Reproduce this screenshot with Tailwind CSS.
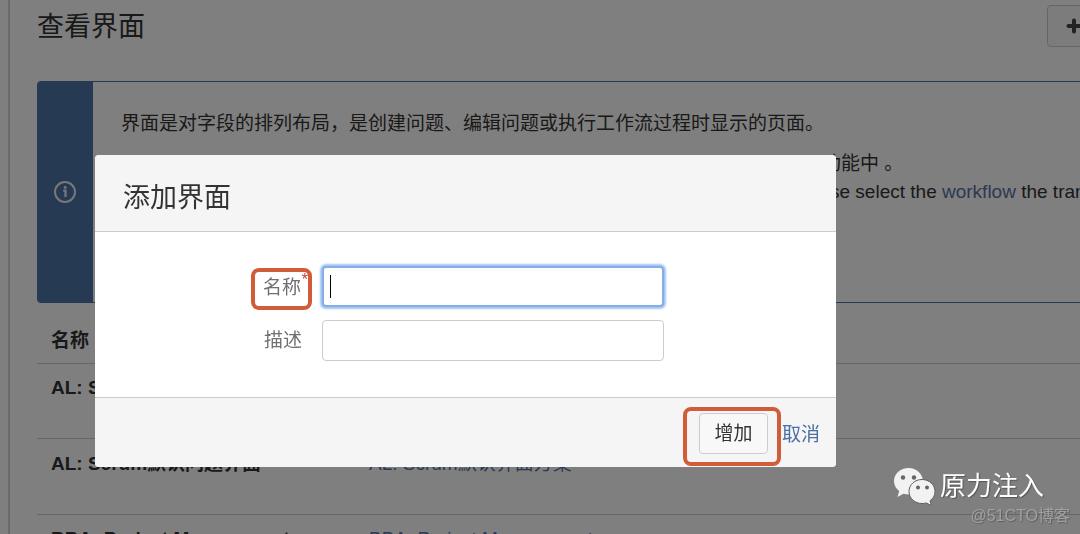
<!DOCTYPE html>
<html lang="zh-CN">
<head>
<meta charset="utf-8">
<title>查看界面</title>
<script src="https://cdn.jsdelivr.net/npm/@tailwindcss/browser@4"></script>
</head>
<body class="h-screen overflow-hidden bg-white font-['Liberation_Sans','Noto_Sans_CJK_SC',sans-serif] text-[19px] leading-7 text-[#333333]">
<div class="flex h-screen overflow-hidden">
  <aside class="w-2 shrink-0"></aside>
  <main class="min-w-0 flex-1 border-l-2 border-[#d4d4d4] pl-[27px]">
    <header class="flex h-20 items-start justify-between pt-[5px]">
      <h1 class="pt-1 text-[27px] leading-9">查看界面</h1>
      <button type="button" aria-label="添加界面" class="-mr-2 flex h-[42px] w-[41px] items-center rounded-l border border-[#cccccc] bg-[#f8f8f8] pl-[18px]">
        <svg class="size-4 shrink-0" viewBox="0 0 16 16" fill="none" stroke="#444" stroke-width="4" stroke-linecap="round"><path d="M8 2.500v11M2.500 8h11"/></svg>
      </button>
    </header>

    <section class="mt-px flex h-[222px] overflow-hidden rounded-l border-y border-[#4c74a8]">
      <div class="flex w-14 shrink-0 items-center justify-center bg-[#4c74a8]">
        <svg class="size-[22px]" viewBox="0 0 22 22" fill="none" stroke="#f0f0f0" stroke-width="2"><circle cx="11" cy="11" r="10"/><path d="M9.200 9.700h2.300v6.300" stroke-width="2.200"/><circle cx="11.200" cy="6.500" r="1.400" fill="#f0f0f0" stroke="none"/></svg>
      </div>
      <div class="whitespace-nowrap pl-7 pt-7">
        <p>界面是对字段的排列布局，是创建问题、编辑问题或执行工作流过程时显示的页面。</p>
        <p class="mt-3 pl-[701px]">功能中 。</p>
        <p class="pl-[671px]">Please select the <a href="#" class="text-[#5673a8]">workflow</a> the transition</p>
      </div>
    </section>

    <table class="mt-3 w-full table-fixed border-collapse text-left">
      <thead>
        <tr class="h-12 border-b border-[#cccccc]"><th class="w-[318px] pl-3.5 pt-1 font-bold">名称</th><th></th></tr>
      </thead>
      <tbody class="whitespace-nowrap align-top">
        <tr class="h-[75px] border-b border-[#cccccc]"><td class="pl-3.5 pt-2.5 font-bold">AL: Scrum</td><td></td></tr>
        <tr class="h-[76px] border-b border-[#cccccc]"><td class="pl-3.5 pt-[11px] font-bold">AL: Scrum默认问题界面</td><td class="pl-3.5 pt-[11px]"><a href="#" class="text-[#5673a8]">AL: Scrum默认界面方案</a></td></tr>
        <tr class="h-[75px]"><td class="pl-3.5 pt-2.5 font-bold">BBA: Project Management</td><td class="pl-3.5 pt-2.5"><a href="#" class="text-[#5673a8]">BBA: Project Management</a></td></tr>
      </tbody>
    </table>
  </main>
</div>

<div class="fixed inset-0 bg-black/50 pl-[95px] pt-[155px]">
  <form role="dialog" aria-labelledby="dialog-title" class="w-full max-w-[741px] overflow-hidden rounded bg-white">
    <header class="border-b border-[#cccccc] bg-[#f5f5f5] px-7 pb-[15px] pt-[25px]">
      <h2 id="dialog-title" class="text-[27px] leading-9">添加界面</h2>
    </header>
    <div class="flex flex-col gap-[13px] pb-9 pt-[34px] text-[#707070]">
      <div class="flex h-[41px] items-center">
        <div class="flex w-[227px] justify-end">
          <label for="name" class="relative mr-2.5 mt-1 rounded-lg border-4 border-[#d15c38] pb-1 pl-2 pr-[7px] pt-0.5">名称<span class="absolute -top-0.5 right-0 text-[17px] leading-5 text-[#d04437]">*</span></label>
        </div>
        <div class="relative">
          <input id="name" type="text" class="block h-[41px] w-[342px] rounded-sm border-2 border-[#85aee6] bg-white px-2 text-[#333333] shadow-[0_0_2px_2px_#a3c4f3] outline-none">
          <span aria-hidden="true" class="absolute left-2 top-[9px] h-[23px] w-px bg-black"></span>
        </div>
      </div>
      <div class="flex items-center">
        <label for="description" class="mr-5 w-[207px] text-right">描述</label>
        <input id="description" type="text" class="h-[41px] w-[342px] rounded border border-[#cccccc] bg-white px-2 outline-none">
      </div>
    </div>
    <footer class="flex items-center justify-end border-t border-[#cccccc] bg-[#f5f5f5] pb-px pr-4 pt-[9px]">
      <div class="rounded-lg border-4 border-[#d15c38] pb-2 pl-3 pr-[9px] pt-0.5">
        <button type="submit" class="block h-[41px] w-[69px] rounded border border-[#cccccc] bg-[#f8f8f8]">增加</button>
      </div>
      <a href="#" class="-mt-1 ml-px text-[#4c6ea3]">取消</a>
    </footer>
  </form>
</div>

<div class="fixed bottom-2 right-2.5 flex flex-col items-end whitespace-nowrap">
  <div class="mr-[26px] flex items-start gap-1 text-[26px] leading-9 text-white">
    <svg class="h-[38px] w-[43px]" viewBox="0 0 43 38">
      <path d="M15.500 0C7.500 0 1 5.700 1 13c0 4.200 2 7.700 5.200 10L4.500 29l6-3.200c1.600.5 3.300.7 5 .7C23.500 26.500 30 20.600 30 13.300S23.500 0 15.500 0Z" fill="#f2f2f2"/>
      <path d="M29 11.500c-7 0-13 5-13 12s6 12 13 12c1.500 0 3-.2 4.200-.6l5.300 2.600-1.500-4.700c3-2.100 5-5.200 5-9.300 0-7-6-12-13-12Z" fill="#f2f2f2" stroke="#606060" stroke-width="1"/>
      <g fill="#666"><circle cx="10" cy="9.500" r="2.200"/><circle cx="21" cy="9.500" r="2.200"/><circle cx="25" cy="19.500" r="2"/><circle cx="34" cy="19.500" r="2"/></g>
    </svg>
    <span class="[text-shadow:1px_1px_1px_#555]">原力注入</span>
  </div>
  <span class="text-[16px] leading-5 text-[#a0a0a0] [text-shadow:1px_1px_1px_#606060]">@51CTO博客</span>
</div>
</body>
</html>
